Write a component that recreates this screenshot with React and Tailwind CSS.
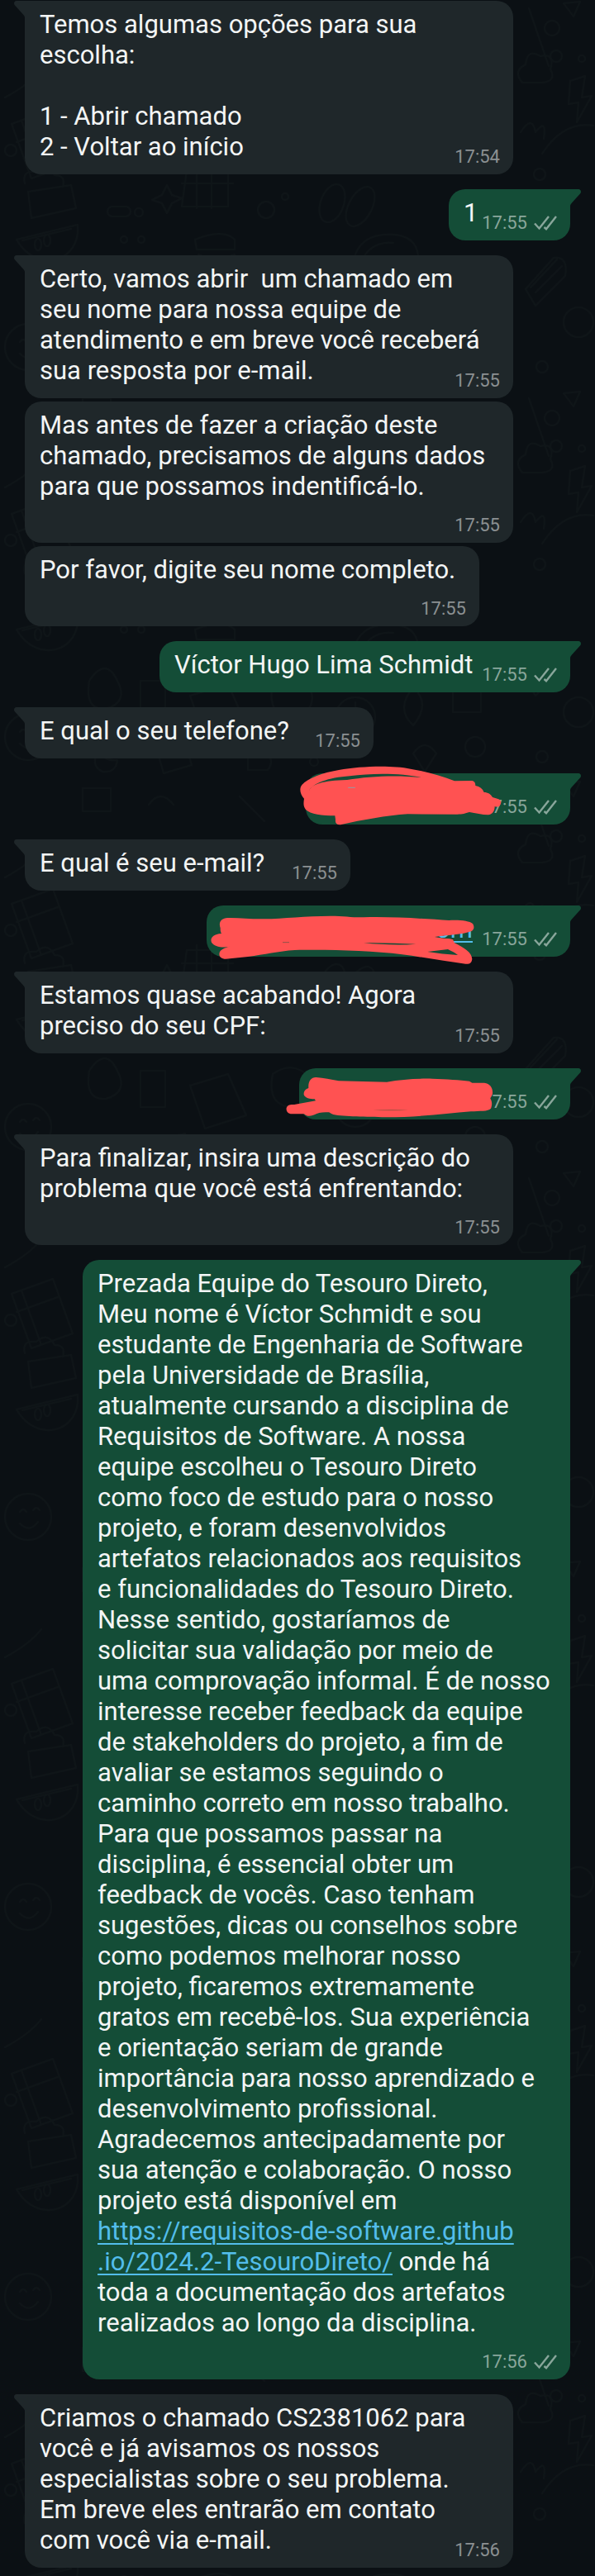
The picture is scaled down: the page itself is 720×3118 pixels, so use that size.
import React from "react";

const RED = "#ff5252";

function Wallpaper() {
  return (
    <svg className="absolute inset-0 -z-10 h-full w-full" aria-hidden="true">
      <defs>
        <pattern id="doodles" width="720" height="472" patternUnits="userSpaceOnUse">
          <g fill="none" stroke="#0f1518" strokeWidth="2" strokeLinecap="round" strokeLinejoin="round">
            <path d="M20 290 L94 272 C98 318 44 332 20 290Z M27 291 L86 277" />
            <ellipse cx="46" cy="296" rx="4" ry="7" />
            <ellipse cx="57" cy="291" rx="4" ry="7" />
            <path d="M6 118 q30 -16 44 -34 M14 150 l50 -18 24 66 -50 18Z M26 146 l24 66 M20 172 l50 -18" />
            <path d="M30 222 q-4 -16 14 -14 q14 -12 22 4 q14 0 10 14 M34 232 l52 -8 6 28 -54 12Z" />
            <path d="M226 206 h50 v44 h-56Z M220 222 h62 M238 200 v52 M256 200 v52" />
            <path d="M196 236 l6 -12 6 12 12 4 -12 6 -6 12 -6 -12 -12 -4Z" />
            <rect x="130" y="250" width="28" height="12" rx="6" />
            <circle cx="168" cy="257" r="5" />
            <ellipse cx="402" cy="246" rx="14" ry="24" transform="rotate(20 402 246)" />
            <ellipse cx="436" cy="250" rx="14" ry="26" transform="rotate(28 436 250)" />
            <path d="M236 290 q34 -14 48 0 v12 h-46Z M240 308 q20 10 44 0" />
            <path d="M430 308 q10 -26 46 -24 q28 2 30 26 M442 308 q12 -16 34 -14" />
            <circle cx="322" cy="254" r="10" />
            <circle cx="345" cy="238" r="4" />
            <circle cx="150" cy="290" r="4" />
            <circle cx="171" cy="290" r="4" />
            <path d="M632 100 q-12 -14 4 -22 q2 -20 18 -10 q18 -4 12 16 q8 14 -10 16Z" />
            <path d="M690 98 l18 -6 -4 26 12 -2 -18 32 2 -24 -12 2Z" />
            <circle cx="668" cy="34" r="9" />
            <circle cx="673" cy="68" r="7" />
            <circle cx="704" cy="71" r="4" />
            <path d="M682 4 l20 -2 -8 18Z M640 10 l24 70 M630 160 q14 -22 18 0 q14 -18 10 8 M656 186 q26 -40 62 -34" />
            <circle cx="653" cy="211" r="7" />
            <path d="M636 350 l34 -38 q18 -2 14 22 l-36 36Z M642 348 l32 -34 M648 354 l32 -32" />
            <circle cx="700" cy="390" r="18" />
            <circle cx="656" cy="444" r="7" />
            <circle cx="34" cy="420" r="28" />
            <path d="M24 414 q4 -6 8 0 M40 412 q4 -6 8 0 M24 428 q12 12 22 -2" />
            <path d="M108 352 q20 -30 34 0 q14 26 -14 34 q-26 2 -20 -34Z M170 352 h30 v44 h-30Z" />
            <path d="M230 370 l46 -14 22 50 -50 16Z M330 356 q26 -18 46 6 q8 26 -20 34 q-34 0 -26 -40Z" />
            <circle cx="430" cy="396" r="24" />
            <path d="M430 378 v20 l12 8 M500 360 q22 20 0 46 q-22 -20 0 -46Z M548 356 h34 v34 h-34Z" />
            <circle cx="575" cy="432" r="12" />
            <path d="M120 436 q-12 18 4 26 q16 2 18 -14 q-16 2 -22 -12Z M190 436 l34 -8 8 26 -34 10Z" />
            <path d="M300 440 h24 q8 10 0 20 h-24Z M500 440 q14 -20 28 0 l-14 22Z" />
            <circle cx="380" cy="450" r="5" />
            <circle cx="13" cy="182" r="7" />
            <path d="M100 10 h34 v28 h-34Z M180 30 q14 -20 30 0 M290 20 l30 30 M420 20 q20 20 40 0" />
          </g>
        </pattern>
      </defs>
      <rect width="100%" height="100%" fill="url(#doodles)" />
    </svg>
  );
}

function Ticks() {
  return (
    <svg className="h-[18px] w-7" viewBox="0 0 28 18" fill="none" stroke="currentColor" strokeWidth="2.4" role="img" aria-label="Lida">
      <path d="M1 9.5 L6.5 15.5 L18 1" />
      <path d="M12.5 14 L15 16.2 L27 1" />
    </svg>
  );
}

function Tail({ sent }) {
  return sent ? (
    <svg className="absolute top-0 left-full h-5 w-[13px]" viewBox="0 0 13 20" fill="#144d37" aria-hidden="true">
      <path d="M-1 0H10C12.8 0 13.8 3 12.2 5.2L2 16.5Q0 18.5 0 20H-1Z" />
    </svg>
  ) : (
    <svg className="absolute top-0 right-full h-5 w-[13px]" viewBox="0 0 13 20" fill="#1f272a" aria-hidden="true">
      <path d="M14 0H3C.2 0-.8 3 .8 5.2L11 16.5Q13 18.5 13 20H14Z" />
    </svg>
  );
}

function Bubble({ sent, first = true, stacked, time, width, body = "", overlay, children }) {
  const side = sent
    ? "self-end bg-[#144d37] rounded-tr-none"
    : "self-start bg-[#1f272a]" + (first ? " rounded-tl-none" : "");
  return (
    <article className={`relative flex max-w-full flex-col rounded-[20px] pt-[10px] pb-[9px] ${side} ${first ? "mt-[18px]" : "mt-1"} ${width}`}>
      {first && <Tail sent={sent} />}
      <p className={`min-h-[43px] pb-[6px] pl-[18px] text-[31px] leading-[37px] whitespace-pre-wrap text-[#f3f5f5] ${body}`}>{children}</p>
      <div className={`flex h-[35px] items-end gap-2 self-end pr-4 text-[22px] leading-6 ${sent ? "text-[#89a69b]" : "text-[#8b9092]"} ${stacked ? "" : "-mt-[35px]"}`}>
        <time>{time}</time>
        {sent && (
          <span className="flex h-6 items-center">
            <Ticks />
          </span>
        )}
      </div>
      {overlay}
    </article>
  );
}

function PhoneScribble() {
  return (
    <svg className="absolute -top-4 -left-[30px] h-[100px] w-[380px]" viewBox="0 0 1140 300" aria-hidden="true">
      <path
        fill={RED}
        fillRule="evenodd"
        d="M84 140C70 126 65 104 76 90C98 66 150 46 210 36C290 22 400 18 470 32C530 42 585 58 630 76L694 75C703 77 706 84 706 93C722 96 732 104 737 117C751 117 762 124 768 135L790 142C800 146 801 156 794 166C788 172 779 170 776 168C776 184 768 198 752 199C730 199 706 192 684 189C668 194 660 197 640 197L460 196C380 202 300 216 216 235C202 236 196 228 198 216L196 202C150 202 106 196 90 180C80 168 82 154 84 140Z M102 112C112 88 150 74 240 72C320 58 420 54 510 63C440 47 330 46 250 58C170 64 116 84 102 112Z"
      />
      <path stroke="#a98d94" strokeWidth="4" strokeLinecap="round" d="M245 100H268" />
    </svg>
  );
}

function MailScribble() {
  return (
    <svg className="absolute -top-[6px] -left-[10px] h-[90px] w-[480px]" viewBox="0 0 1440 270" aria-hidden="true">
      <path
        fill={RED}
        fillRule="evenodd"
        d="M80 100C72 78 84 64 106 63C150 62 190 68 240 67C310 66 390 56 480 56C530 56 560 62 600 61C700 58 820 66 910 72C950 70 984 74 996 84C1004 96 1000 108 990 112C960 124 900 126 858 132C890 140 910 136 924 142L930 154C966 172 992 188 994 212C992 228 984 231 970 230C900 222 820 206 740 196C620 180 460 178 350 180C290 184 240 196 180 204L100 212C80 212 72 200 78 186C86 174 104 170 120 166C90 174 58 168 48 152C42 138 52 122 84 120C80 114 80 108 80 100Z M600 154C660 152 730 156 790 158C730 163 660 160 600 154Z M832 186L906 177C920 184 932 190 942 198C906 196 866 192 832 186Z"
      />
      <path stroke="#8f5148" strokeWidth="3" d="M306 152H330" />
    </svg>
  );
}

function CpfScribble() {
  return (
    <svg className="absolute -top-2 -left-[22px] h-[90px] w-[380px]" viewBox="0 0 1140 270" aria-hidden="true">
      <path
        fill={RED}
        d="M100 96C98 70 110 56 128 57C156 60 180 64 210 70L384 74C440 64 490 61 550 62C600 64 650 66 684 71L694 77H738C760 80 770 96 768 116C766 126 760 130 760 134C768 146 766 160 762 170C752 182 720 178 690 181C600 188 500 202 380 202C310 200 230 200 190 192C182 190 178 186 174 184C158 184 142 184 128 190C112 198 96 202 84 190H40C24 190 18 178 20 168C24 156 34 156 48 156L126 142L122 136C104 136 88 132 83 120C82 106 90 100 100 96Z"
      />
      <path fill="#ae5143" d="M334 176Q400 172 462 176Q400 180 334 176Z" />
    </svg>
  );
}

const FULL = "w-[591px]";

export default function App() {
  return (
    <main
      className="relative isolate flex min-h-screen flex-col overflow-hidden bg-[#0b1014] pr-[30px] pb-[10px] pl-[30px] font-['Roboto',sans-serif]"
    >
      <Wallpaper />
      <div className="-mt-[17px] flex flex-col">
        <Bubble time="17:54" width={FULL}>
          {"Temos algumas opções para sua\nescolha:\n\n1 - Abrir chamado\n2 - Voltar ao início"}
        </Bubble>
        <Bubble sent time="17:55" width="w-[147px]">1</Bubble>
        <Bubble time="17:55" width={FULL}>
          {"Certo, vamos abrir  um chamado em\nseu nome para nossa equipe de\natendimento e em breve você receberá\nsua resposta por e-mail."}
        </Bubble>
        <Bubble first={false} stacked time="17:55" width={FULL}>
          {"Mas antes de fazer a criação deste\nchamado, precisamos de alguns dados\npara que possamos indentificá-lo."}
        </Bubble>
        <Bubble first={false} stacked time="17:55" width="w-[550px]">
          Por favor, digite seu nome completo.
        </Bubble>
        <Bubble sent time="17:55" width="w-[497px]">Víctor Hugo Lima Schmidt</Bubble>
        <Bubble time="17:55" width="w-[422px]">E qual o seu telefone?</Bubble>
        <Bubble sent time="17:55" width="w-[320px]" overlay={<PhoneScribble />} />
        <Bubble time="17:55" width="w-[394px]">E qual é seu e-mail?</Bubble>
        <Bubble sent time="17:55" width="w-[440px]" body="pr-[118px] text-right" overlay={<MailScribble />}>
          <a href="#email" className="text-[#53bdeb] underline decoration-2 underline-offset-4">om</a>
        </Bubble>
        <Bubble time="17:55" width={FULL}>{"Estamos quase acabando! Agora\npreciso do seu CPF:"}</Bubble>
        <Bubble sent time="17:55" width="w-[328px]" overlay={<CpfScribble />} />
        <Bubble stacked time="17:55" width={FULL}>
          {"Para finalizar, insira uma descrição do\nproblema que você está enfrentando:"}
        </Bubble>
        <Bubble sent stacked time="17:56" width="w-[590px]">
          {"Prezada Equipe do Tesouro Direto,\nMeu nome é Víctor Schmidt e sou\nestudante de Engenharia de Software\npela Universidade de Brasília,\natualmente cursando a disciplina de\nRequisitos de Software. A nossa\nequipe escolheu o Tesouro Direto\ncomo foco de estudo para o nosso\nprojeto, e foram desenvolvidos\nartefatos relacionados aos requisitos\ne funcionalidades do Tesouro Direto.\nNesse sentido, gostaríamos de\nsolicitar sua validação por meio de\numa comprovação informal. É de nosso\ninteresse receber feedback da equipe\nde stakeholders do projeto, a fim de\navaliar se estamos seguindo o\ncaminho correto em nosso trabalho.\nPara que possamos passar na\ndisciplina, é essencial obter um\nfeedback de vocês. Caso tenham\nsugestões, dicas ou conselhos sobre\ncomo podemos melhorar nosso\nprojeto, ficaremos extremamente\ngratos em recebê-los. Sua experiência\ne orientação seriam de grande\nimportância para nosso aprendizado e\ndesenvolvimento profissional.\nAgradecemos antecipadamente por\nsua atenção e colaboração. O nosso\nprojeto está disponível em\n"}
          <a
            href="https://requisitos-de-software.github.io/2024.2-TesouroDireto/"
            className="text-[#53bdeb] underline decoration-2 underline-offset-4"
          >
            {"https://requisitos-de-software.github\n.io/2024.2-TesouroDireto/"}
          </a>
          {" onde há\ntoda a documentação dos artefatos\nrealizados ao longo da disciplina."}
        </Bubble>
        <Bubble time="17:56" width={FULL}>
          {"Criamos o chamado CS2381062 para\nvocê e já avisamos os nossos\nespecialistas sobre o seu problema.\nEm breve eles entrarão em contato\ncom você via e-mail."}
        </Bubble>
      </div>
    </main>
  );
}
